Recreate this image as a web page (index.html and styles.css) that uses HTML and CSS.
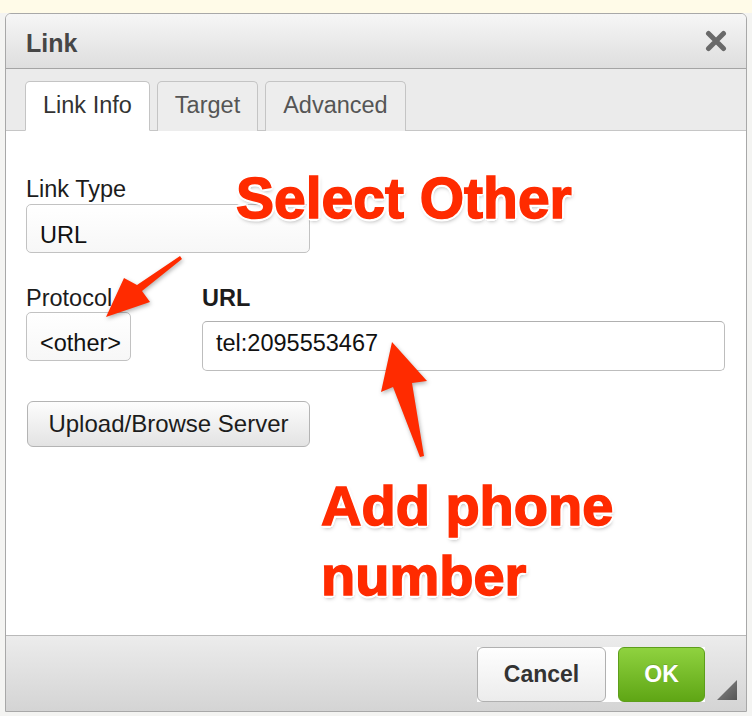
FILE: index.html
```html
<!DOCTYPE html>
<html lang="en">
<head>
  <meta charset="UTF-8">
  <meta name="viewport" content="width=device-width, initial-scale=1.0">
  <title>Link</title>
  <link rel="stylesheet" href="styles.css">
</head>
<body>
  <div class="dialog">
    <div class="titlebar">
      <span class="title">Link</span>
      <svg class="close" width="22" height="22" viewBox="0 0 22 22">
        <path d="M3.5 3.5 L18.5 18.5 M18.5 3.5 L3.5 18.5" stroke="#6a6a6a" stroke-width="5" stroke-linecap="round"/>
      </svg>
    </div>
    <div class="tabs">
      <div class="tab active">Link Info</div>
      <div class="tab">Target</div>
      <div class="tab">Advanced</div>
    </div>
    <div class="content">
      <label class="label">Link Type</label>
      <div class="select type-select">URL</div>
      <div class="row">
        <div class="field">
          <label class="label">Protocol</label>
          <div class="select protocol-select">&lt;other&gt;</div>
        </div>
        <div class="field url-field">
          <label class="label strong">URL</label>
          <div class="text-input">tel:2095553467</div>
        </div>
      </div>
      <button class="btn browse">Upload/Browse Server</button>
    </div>
    <div class="footer">
      <div class="actions">
        <button class="btn cancel">Cancel</button>
        <button class="btn ok">OK</button>
      </div>
      <span class="resize"></span>
    </div>
  </div>

  <!-- annotations drawn over the screenshot -->
  <div class="note note-select">Select Other</div>
  <div class="note note-phone">Add phone<br>number</div>
  <svg class="arrows" width="752" height="716" viewBox="0 0 752 716">
    <polygon points="180,256 137,285 124,278 106,317 150,302 142,291 182,259"/>
    <polygon points="392,342 427,381 412,383 424,456 420,457 393,387 381,392"/>
  </svg>
</body>
</html>
```

FILE: styles.css
```css
:root {
  --font-ui: "Liberation Sans", Arial, sans-serif;
  --color-border: #a8a8a8;
  --color-field-border: #c2c2c2;
  --color-text: #222;
  --color-note: #ff2b00;
}

body {
  margin: 0;
  font-family: var(--font-ui);
  color: var(--color-text);
  background: linear-gradient(#fffbe8 0, #fffbe8 13px, #f4f4f2 13px);
  width: 752px;
  height: 716px;
  overflow: hidden;
}

.dialog {
  box-sizing: border-box;
  width: 742px;
  height: 699px;
  margin: 13px 0 0 5px;
  border: 1px solid var(--color-border);
  border-radius: 6px 6px 0 0;
  overflow: hidden;
  display: flex;
  flex-direction: column;
  background: #fff;
}

.titlebar {
  height: 54px;
  flex: none;
  display: flex;
  align-items: center;
  justify-content: space-between;
  padding: 0 19px 0 20px;
  background: linear-gradient(#f6f6f6, #dedede);
  border-bottom: 1px solid #a4a4a4;
}

.title {
  font-size: 25px;
  font-weight: bold;
  color: #464646;
  padding-top: 5px;
}

.tabs {
  flex: none;
  display: flex;
  gap: 7px;
  padding: 12px 0 0 19px;
  background: #ebebeb;
  border-bottom: 1px solid #c6c6c6;
}

.tab {
  box-sizing: border-box;
  height: 50px;
  line-height: 47px;
  padding: 0 17px;
  margin-bottom: -1px;
  font-size: 23.5px;
  color: #555;
  background: #ededed;
  border: 1px solid #c4c4c4;
  border-bottom: none;
  border-radius: 5px 5px 0 0;
}

.tab.active {
  background: #fff;
  color: #333;
  border-bottom: 1px solid #fff;
}

.content {
  flex: 1;
  padding: 45px 21px 0 20px;
  background: #fff;
}

.label {
  display: block;
  font-size: 23.5px;
  line-height: 26px;
  color: #1c1c1c;
}

.label.strong {
  font-weight: bold;
  margin-bottom: 10px;
}

.select, .text-input {
  box-sizing: border-box;
  font-size: 23.5px;
  line-height: 26px;
  color: #111;
  border: 1px solid var(--color-field-border);
  border-radius: 5px;
  padding-left: 13px;
}

.select {
  height: 49px;
  padding-top: 17px;
  background: linear-gradient(#fff, #f7f7f7);
}

.type-select {
  width: 284px;
  margin-top: 2px;
}

.protocol-select {
  width: 105px;
  margin-top: 1px;
}

.row {
  display: flex;
  gap: 71px;
  margin-top: 32px;
}

.url-field {
  flex: 1;
}

.text-input {
  height: 50px;
  padding-top: 8px;
  border-color: #bdbdbd;
  border-top-color: #b0b0b0;
  background: #fff;
}

.btn {
  box-sizing: border-box;
  font-family: var(--font-ui);
  font-size: 23px;
  border-radius: 6px;
  cursor: pointer;
  padding: 0;
}

.browse {
  display: block;
  width: 283px;
  height: 46px;
  margin: 30px 0 0 1px;
  font-size: 24px;
  color: #1c1c1c;
  border: 1px solid #b4b4b4;
  background: linear-gradient(#fdfdfd, #e3e3e3);
}

.footer {
  flex: none;
  height: 64px;
  display: flex;
  justify-content: flex-end;
  align-items: flex-start;
  padding: 11px 9px 0 0;
  border-top: 1px solid #b9b9b9;
  background: linear-gradient(#ececec, #d4d4d4);
}

.actions {
  display: flex;
  gap: 12px;
  background: #fff;
}

.cancel {
  width: 129px;
  height: 55px;
  font-weight: bold;
  color: #333;
  border: 1px solid #b0b0b0;
  background: linear-gradient(#fefefe, #ececec);
}

.ok {
  width: 87px;
  height: 55px;
  font-weight: bold;
  color: #fff;
  text-shadow: 0 -1px 0 rgba(0, 0, 0, 0.15);
  border: 1px solid #5d9e1b;
  background: linear-gradient(#8fd23f, #5fa615);
}

.resize {
  width: 20px;
  height: 20px;
  margin: 33px 0 0 12px;
  background: linear-gradient(135deg, #8a8a8a, #555);
  clip-path: polygon(100% 0, 100% 100%, 0 100%);
}

.note {
  position: absolute;
  font-size: 56px;
  line-height: 1;
  font-weight: bold;
  white-space: nowrap;
  color: var(--color-note);
  -webkit-text-stroke: 1.5px var(--color-note);
  text-shadow:
    3px 0 0 #fff, -3px 0 0 #fff, 0 3px 0 #fff, 0 -3px 0 #fff,
    2px 2px 0 #fff, -2px -2px 0 #fff, 2px -2px 0 #fff, -2px 2px 0 #fff,
    1px 3px 4px rgba(0, 0, 0, 0.35);
}

.note-select {
  left: 236px;
  top: 170px;
  font-size: 57px;
}

.note-phone {
  left: 321px;
  top: 471px;
  line-height: 70px;
}

.arrows {
  position: absolute;
  left: 0;
  top: 0;
  pointer-events: none;
  fill: var(--color-note);
  filter: drop-shadow(1px 2px 2px rgba(0, 0, 0, 0.3));
}
```
